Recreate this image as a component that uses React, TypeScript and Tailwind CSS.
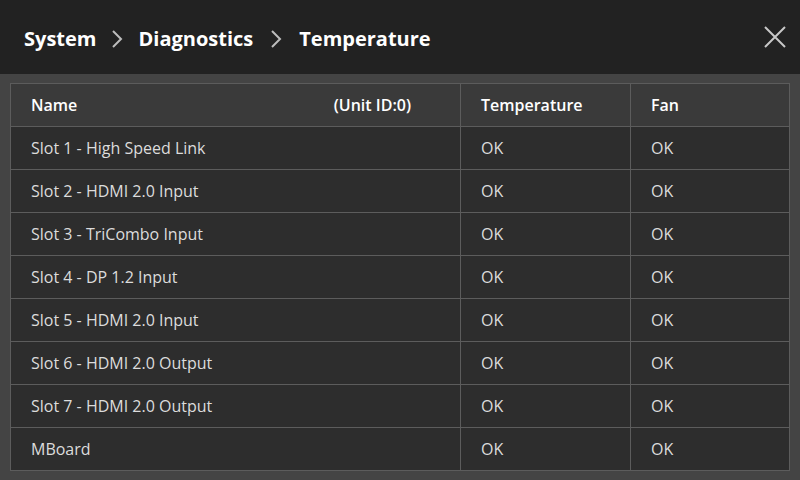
import React from 'react';

const rows = [
  'Slot 1 - High Speed Link',
  'Slot 2 - HDMI 2.0 Input',
  'Slot 3 - TriCombo Input',
  'Slot 4 - DP 1.2 Input',
  'Slot 5 - HDMI 2.0 Input',
  'Slot 6 - HDMI 2.0 Output',
  'Slot 7 - HDMI 2.0 Output',
  'MBoard',
];

const Chevron: React.FC<{ className?: string }> = ({ className }) => (
  <svg width="14" height="22" viewBox="0 0 14 22" className={className}>
    <path d="M3 3 L11 11 L3 19" fill="none" stroke="#bdbdbd" strokeWidth="2" />
  </svg>
);

const App: React.FC = () => {
  return (
    <div className="w-[800px] h-[480px] bg-[#444444] flex flex-col overflow-hidden" style={{ fontFamily: '"Open Sans", sans-serif' }}>
      <header className="h-[74px] bg-[#222222] flex items-center justify-between pl-6 pr-[14px] shrink-0">
        <div className="flex items-center text-[20px] font-bold text-white pt-1">
          <span>System</span>
          <Chevron className="mx-[14px]" />
          <span>Diagnostics</span>
          <Chevron className="ml-[16px] mr-[16px]" />
          <span>Temperature</span>
        </div>
        <button className="w-[22px] h-[22px]" title="Close">
          <svg width="22" height="22" viewBox="0 0 22 22">
            <path d="M1 1 L21 21 M21 1 L1 21" stroke="#c8c8c8" strokeWidth="2" fill="none" />
          </svg>
        </button>
      </header>
      <main className="pt-[9px] px-[10px]">
        <table className="w-[780px] border-collapse border border-[#5c5c5c] text-[16px]">
          <thead>
            <tr className="h-[43px] bg-[#3a3a3a] text-white">
              <th className="w-[450px] border border-[#5c5c5c] pl-5 pr-[49px] text-left font-semibold">
                <div className="flex justify-between">
                  <span>Name</span>
                  <span>(Unit ID:0)</span>
                </div>
              </th>
              <th className="w-[170px] border border-[#5c5c5c] pl-5 text-left font-semibold">Temperature</th>
              <th className="border border-[#5c5c5c] pl-5 text-left font-semibold">Fan</th>
            </tr>
          </thead>
          <tbody>
            {rows.map(name => (
              <tr key={name} className="h-[43px] bg-[#2d2d2d] text-[#dcdcdc]">
                <td className="border border-[#5c5c5c] pl-5">{name}</td>
                <td className="border border-[#5c5c5c] pl-5">OK</td>
                <td className="border border-[#5c5c5c] pl-5">OK</td>
              </tr>
            ))}
          </tbody>
        </table>
      </main>
    </div>
  );
};

export default App;
